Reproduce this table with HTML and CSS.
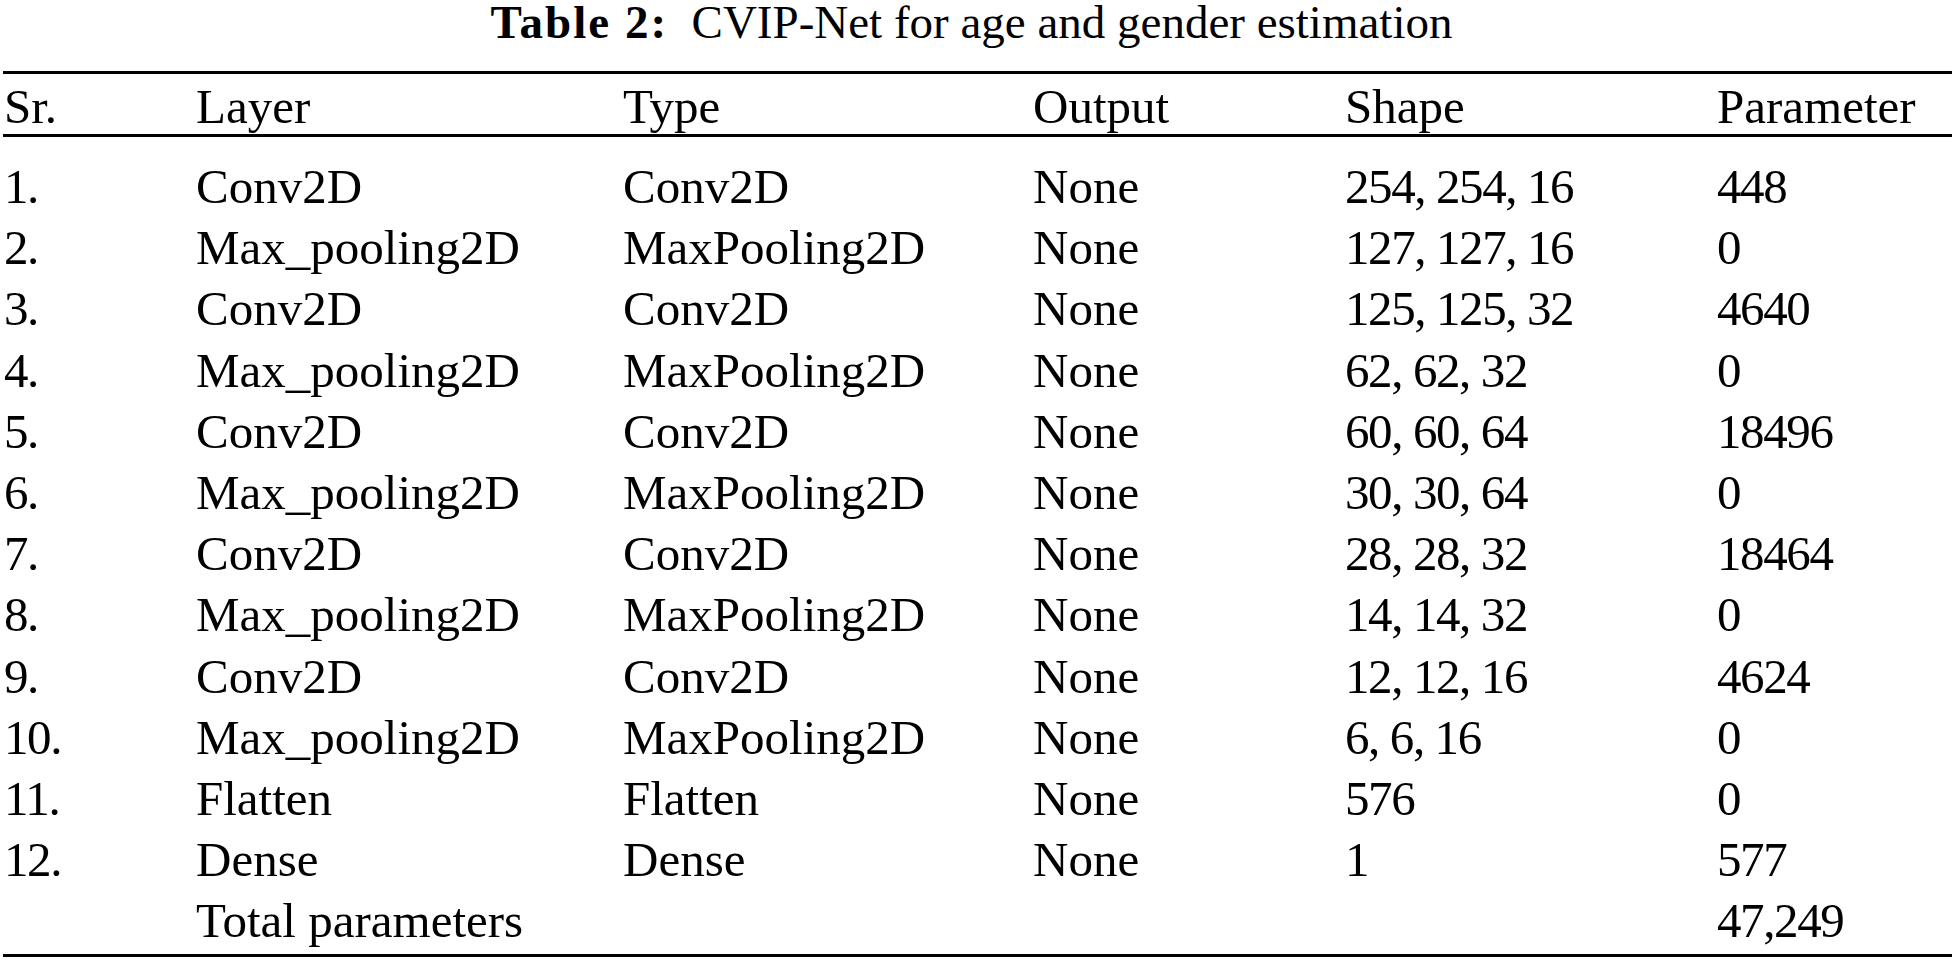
FILE: index.html
```html
<!DOCTYPE html>
<html>
<head>
<meta charset="utf-8">
<link rel="stylesheet" href="styles.css">
</head>
<body>
<div class="page">
  <div class="caption"><b>Table 2:</b>&nbsp; CVIP-Net for age and gender estimation</div>
  <table class="tbl">
    <colgroup>
      <col class="c1"><col class="c2"><col class="c3"><col class="c4"><col class="c5"><col class="c6">
    </colgroup>
    <thead>
      <tr><th>Sr.</th><th>Layer</th><th>Type</th><th>Output</th><th>Shape</th><th>Parameter</th></tr>
    </thead>
    <tbody>
      <tr class="first"><td class="num">1.</td><td>Conv2D</td><td>Conv2D</td><td>None</td><td class="num">254, 254, 16</td><td class="num">448</td></tr>
      <tr><td class="num">2.</td><td>Max_pooling2D</td><td>MaxPooling2D</td><td>None</td><td class="num">127, 127, 16</td><td class="num">0</td></tr>
      <tr><td class="num">3.</td><td>Conv2D</td><td>Conv2D</td><td>None</td><td class="num">125, 125, 32</td><td class="num">4640</td></tr>
      <tr><td class="num">4.</td><td>Max_pooling2D</td><td>MaxPooling2D</td><td>None</td><td class="num">62, 62, 32</td><td class="num">0</td></tr>
      <tr><td class="num">5.</td><td>Conv2D</td><td>Conv2D</td><td>None</td><td class="num">60, 60, 64</td><td class="num">18496</td></tr>
      <tr><td class="num">6.</td><td>Max_pooling2D</td><td>MaxPooling2D</td><td>None</td><td class="num">30, 30, 64</td><td class="num">0</td></tr>
      <tr><td class="num">7.</td><td>Conv2D</td><td>Conv2D</td><td>None</td><td class="num">28, 28, 32</td><td class="num">18464</td></tr>
      <tr><td class="num">8.</td><td>Max_pooling2D</td><td>MaxPooling2D</td><td>None</td><td class="num">14, 14, 32</td><td class="num">0</td></tr>
      <tr><td class="num">9.</td><td>Conv2D</td><td>Conv2D</td><td>None</td><td class="num">12, 12, 16</td><td class="num">4624</td></tr>
      <tr><td class="num">10.</td><td>Max_pooling2D</td><td>MaxPooling2D</td><td>None</td><td class="num">6, 6, 16</td><td class="num">0</td></tr>
      <tr><td class="num">11.</td><td>Flatten</td><td>Flatten</td><td>None</td><td class="num">576</td><td class="num">0</td></tr>
      <tr><td class="num">12.</td><td>Dense</td><td>Dense</td><td>None</td><td class="num">1</td><td class="num">577</td></tr>
      <tr class="last"><td></td><td>Total parameters</td><td></td><td></td><td></td><td class="num">47,249</td></tr>
    </tbody>
  </table>
</div>
</body>
</html>
```
FILE: styles.css
```css
html, body {
  margin: 0;
  padding: 0;
  background: #ffffff;
}
body {
  font-family: "Liberation Serif", "Times New Roman", serif;
  color: #000000;
  width: 1954px;
  height: 962px;
  overflow: hidden;
}
.page {
  padding: 0 2px 0 3px;
}
.caption {
  text-align: center;
  font-size: 47px;
  line-height: 44px;
  height: 71px;
  padding-right: 12px;
  box-sizing: border-box;
}
.caption b {
  font-weight: bold;
  letter-spacing: 2px;
}
.tbl {
  width: 1949px;
  border-collapse: separate;
  border-spacing: 0;
  table-layout: fixed;
  font-size: 49px;
  border-top: 3px solid #000;
  border-bottom: 3px solid #000;
}
.c1 { width: 193px; }
.c2 { width: 427px; }
.c3 { width: 410px; }
.c4 { width: 312px; }
.c5 { width: 372px; }
.c6 { width: 235px; }
.tbl th, .tbl td {
  text-align: left;
  font-weight: normal;
  padding: 0;
  white-space: nowrap;
}
.tbl th {
  padding-top: 5px;
  line-height: 55px;
  border-bottom: 3px solid #000;
}
.tbl td {
  line-height: 61.2px;
}
.tbl td.num {
  letter-spacing: -1.4px;
}
.tbl th:first-child, .tbl td:first-child {
  padding-left: 1px;
}
.tbl tr.first td {
  padding-top: 19px;
}
.tbl tr.last td {
  padding-bottom: 2px;
}
```
